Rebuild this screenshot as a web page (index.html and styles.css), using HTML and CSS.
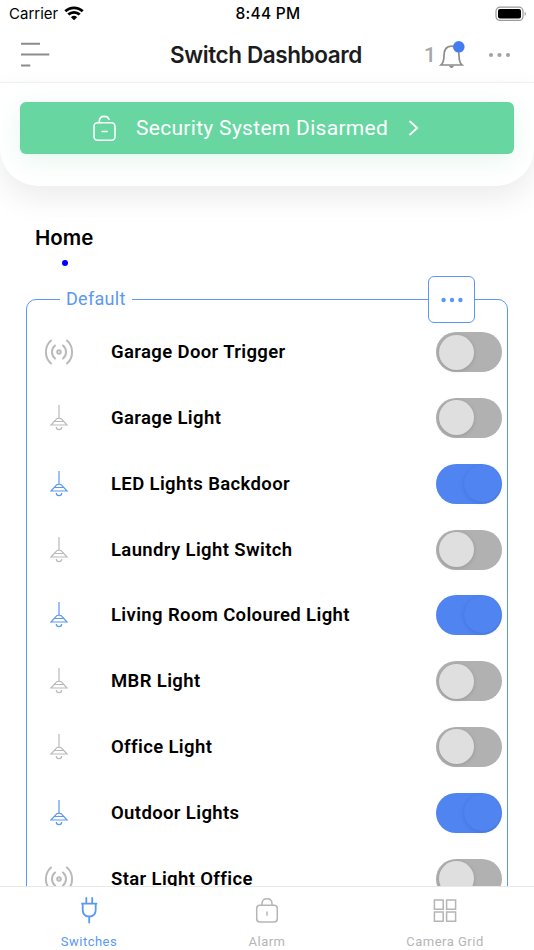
FILE: index.html
```html
<!DOCTYPE html>
<html lang="en">
<head>
  <meta charset="UTF-8">
  <meta name="viewport" content="width=device-width, initial-scale=1">
  <title>Switch Dashboard</title>
  <link rel="stylesheet" href="styles.css">
</head>
<body>

<!-- Icons -->
<svg class="sprite" xmlns="http://www.w3.org/2000/svg">
  <symbol id="icon-lamp" viewBox="0 0 20 28">
    <path d="M10 1v13M6.200 16.500Q7.200 14.200 10 14.200t3.800 2.300L18 21H2zM5.500 17.500h9M7.300 23a2.700 2.700 0 0 0 5.400 0"/>
  </symbol>
  <symbol id="icon-signal" viewBox="0 0 32 28">
    <circle cx="16" cy="14" r="1.800"/>
    <path d="M12 7.500a8.500 8.500 0 0 0 0 13M20 7.500a8.500 8.500 0 0 1 0 13M8 2.500a15.500 15.500 0 0 0 0 23M24 2.500a15.500 15.500 0 0 1 0 23"/>
  </symbol>
</svg>

<div class="status-bar">
  <span class="carrier">Carrier
    <svg width="20" height="15" viewBox="0 0 20 15">
      <path d="M1.300 5.300a12.500 12.500 0 0 1 17.400 0M4.300 8.600a8.200 8.200 0 0 1 11.400 0" fill="none" stroke="#000" stroke-width="2.800"/>
      <path d="M10 14.200L6.900 11.300a4.500 4.500 0 0 1 6.200 0z"/>
    </svg>
  </span>
  <span class="clock">8:44 PM</span>
  <svg class="battery" width="32" height="16" viewBox="0 0 32 16">
    <rect x="1" y="1.200" width="27" height="13.200" rx="4" fill="none" stroke="#999" stroke-width="1.200"/>
    <rect x="3" y="3" width="23" height="9.600" rx="2"/>
    <path d="M29.700 5.500q2.400 2.300 0 4.600z" fill="#999"/>
  </svg>
</div>

<header class="header">
  <svg class="menu" width="32" height="26" viewBox="0 0 32 26">
    <path d="M1 1.800h19M1 12.600h28.300M1 23.400h9.300"/>
  </svg>
  <h1>Switch Dashboard</h1>
  <div class="actions">
    <span class="count">1</span>
    <svg class="bell" width="28" height="30" viewBox="0 0 28 30">
      <path d="M3 25c2.200-2 3-4.500 3-9.500 0-6 2.600-9.300 7.500-9.300s7.500 3.300 7.500 9.300c0 5 .8 7.500 3 9.500z" fill="none" stroke="#8c8c8c" stroke-width="1.700"/>
      <path d="M11 25.700h5q-.7 2.400-2.500 2.400t-2.500-2.400z" fill="#8c8c8c"/>
      <circle class="badge" cx="20.800" cy="6.800" r="5.800"/>
    </svg>
    <svg class="more" width="24" height="6" viewBox="0 0 24 6">
      <circle cx="3" cy="3" r="2.100"/><circle cx="11.500" cy="3" r="2.100"/><circle cx="20" cy="3" r="2.100"/>
    </svg>
  </div>
</header>

<section class="panel">
  <div class="security">
    <svg width="26" height="28" viewBox="0 0 26 28">
      <rect x="2" y="8.800" width="21" height="17.400" rx="3.500"/>
      <path d="M7.300 8.800V7.200q0-4.800 5-4.800 3.600 0 4.700 2.900M10.200 17.500h4.900"/>
    </svg>
    <span>Security System Disarmed</span>
    <svg class="chevron" width="12" height="18" viewBox="0 0 12 18">
      <path d="M2 2.500l7.200 6.500L2 15.500"/>
    </svg>
  </div>
</section>

<main>
  <h2>Home</h2>
  <div class="dot"></div>

  <fieldset class="group">
    <legend>Default</legend>
    <button class="group-more" aria-label="More">
      <svg width="24" height="6" viewBox="0 0 24 6">
        <circle cx="3.600" cy="3" r="2.200"/><circle cx="12" cy="3" r="2.200"/><circle cx="20.400" cy="3" r="2.200"/>
      </svg>
    </button>
    <div id="switchList"></div>
  </fieldset>
</main>

<nav class="tabs">
  <a class="tab active">
    <svg width="28" height="30" viewBox="0 0 28 30">
      <path d="M11.300 3v5.500M17.200 3v5.500M7 8.700h14.500M7.700 8.700v5.800q0 7 6.500 7t6.500-7V8.700M14.200 21.500v6"/>
    </svg>
    <span>Switches</span>
  </a>
  <a class="tab">
    <svg width="28" height="30" viewBox="0 0 28 30">
      <rect x="3.700" y="10.300" width="20.600" height="16.700" rx="3.200"/>
      <path d="M9 10.300V8.600q0-4.900 5-4.900t5 4.900v1.700M14 16.500v4.300"/>
    </svg>
    <span>Alarm</span>
  </a>
  <a class="tab">
    <svg width="28" height="30" viewBox="0 0 28 30">
      <path d="M3.400 5h8.800v9.300H3.400zM15.600 5h9v9.300h-9zM3.400 17h8.800v9.300H3.400zM15.600 17h9v9.300h-9z"/>
    </svg>
    <span>Camera Grid</span>
  </a>
</nav>

<script>
  const switches = [
    { name: "Garage Door Trigger", icon: "signal", on: false },
    { name: "Garage Light", icon: "lamp", on: false },
    { name: "LED Lights Backdoor", icon: "lamp", on: true },
    { name: "Laundry Light Switch", icon: "lamp", on: false },
    { name: "Living Room Coloured Light", icon: "lamp", on: true },
    { name: "MBR Light", icon: "lamp", on: false },
    { name: "Office Light", icon: "lamp", on: false },
    { name: "Outdoor Lights", icon: "lamp", on: true },
    { name: "Star Light Office", icon: "signal", on: false }
  ];

  const list = document.getElementById("switchList");
  switches.forEach(s => {
    const div = document.createElement("div");
    div.className = s.on ? "row on" : "row";
    div.innerHTML = `
      <span class="row-icon"><svg class="${s.icon}"><use href="#icon-${s.icon}"></use></svg></span>
      <span class="name">${s.name}</span>
      <span class="toggle"><span class="knob"></span></span>
    `;
    div.querySelector(".toggle").addEventListener("click", () => div.classList.toggle("on"));
    list.appendChild(div);
  });
</script>
</body>
</html>
```
FILE: styles.css
```css
* {
  box-sizing: border-box;
}
body {
  margin: 0;
  height: 950px;
  overflow: hidden;
  display: flex;
  flex-direction: column;
  background: #fff;
  color: #000;
  font-family: Roboto, "Liberation Sans", sans-serif;
}
svg {
  display: block;
}
.sprite {
  position: absolute;
  width: 0;
  height: 0;
}
.status-bar {
  flex: none;
  height: 27px;
  padding: 0 7px 0 9px;
  display: grid;
  grid-template-columns: 1fr auto 1fr;
  align-items: center;
  font-family: Inter, sans-serif;
  font-size: 15px;
}
.carrier {
  display: flex;
  align-items: center;
  gap: 6px;
}
.clock {
  font-size: 15.5px;
  font-weight: 500;
  letter-spacing: 0.3px;
}
.battery {
  justify-self: end;
}
.header {
  flex: none;
  height: 56px;
  padding: 0 22px 0 20px;
  display: grid;
  grid-template-columns: 1fr auto 1fr;
  align-items: center;
  border-bottom: 1px solid #f1f1f1;
}
.menu {
  fill: none;
  stroke: #8c8c8c;
  stroke-width: 2;
}
h1 {
  margin: 0;
  font-family: Inter, sans-serif;
  font-size: 22.5px;
  font-weight: 600;
  letter-spacing: -0.4px;
  color: #1c1c1e;
}
.actions {
  display: flex;
  align-items: center;
  justify-content: flex-end;
}
.count {
  font-size: 21px;
  font-weight: 500;
  color: #a5a5a5;
}
.bell {
  margin: 0 22px 0 2px;
}
.badge {
  fill: #447cf0;
}
.more {
  fill: #a3a3a3;
}
.panel {
  flex: none;
  height: 103px;
  padding: 19px 20px 0;
  border-radius: 0 0 38px 38px;
  box-shadow: 0 12px 30px rgba(0,0,0,0.08);
}
.security {
  height: 52px;
  padding-left: 72px;
  display: flex;
  align-items: center;
  gap: 18px;
  border-radius: 6px;
  background: #67d6a1;
  box-shadow: 0 6px 26px rgba(103,214,161,0.18);
  color: #fff;
  font-size: 21px;
  letter-spacing: 0.3px;
}
.security svg {
  fill: none;
  stroke: #fff;
  stroke-width: 1.6;
  stroke-linecap: round;
}
.security .chevron {
  margin-left: 2px;
  stroke-width: 1.8;
}
main {
  flex: 1;
  min-height: 0;
  overflow: hidden;
  padding: 38px 26px 0;
}
h2 {
  margin: 0 0 0 9px;
  font-family: Inter, sans-serif;
  font-size: 20.5px;
  line-height: 27px;
  font-weight: 600;
}
.dot {
  width: 6px;
  height: 6px;
  margin: 9px 0 0 36px;
  border-radius: 50%;
  background: #0000fe;
}
.group {
  position: relative;
  min-width: 0;
  height: 680px;
  margin: 20px 0 0;
  padding: 0 5px;
  border: 1px solid #5a98f4;
  border-radius: 10px;
}
legend {
  margin-left: 28px;
  padding: 0 6px;
  font-size: 18px;
  line-height: 26px;
  letter-spacing: 0.3px;
  color: #5a98f4;
}
.group-more {
  position: absolute;
  top: -36px;
  right: 32px;
  width: 47px;
  height: 47px;
  padding: 0;
  display: flex;
  align-items: center;
  justify-content: center;
  border: 1px solid #5a98f4;
  border-radius: 6px;
  background: #fff;
  fill: #5a98f4;
}
#switchList {
  padding-top: 7.3px;
}
.row {
  height: 65.8px;
  display: flex;
  align-items: center;
}
.row-icon {
  width: 79px;
  padding-right: 25px;
  display: flex;
  justify-content: center;
  fill: none;
  stroke: #bababa;
}
.lamp {
  width: 20px;
  height: 28px;
  stroke-width: 1.2;
}
.signal {
  width: 32px;
  height: 28px;
  stroke-width: 2;
  stroke-linecap: round;
}
.on .row-icon {
  stroke: #5a98f4;
}
.name {
  flex: 1;
  font-size: 18.5px;
  font-weight: 600;
  letter-spacing: 0.37px;
}
.toggle {
  width: 66px;
  height: 40px;
  padding: 2.5px;
  display: flex;
  border-radius: 20px;
  background: #b1b1b1;
  cursor: pointer;
}
.knob {
  width: 35px;
  height: 35px;
  border-radius: 50%;
  background: #dfdfdf;
  box-shadow: 0 1px 4px rgba(0,0,0,0.15);
}
.on .toggle {
  justify-content: flex-end;
  padding: 1px;
  background: #4f84f1;
}
.on .knob {
  width: 37px;
  height: 37px;
  background: #4f84f1;
  box-shadow: 0 1px 4px rgba(0,0,0,0.12);
}
.tabs {
  flex: none;
  height: 64px;
  display: grid;
  grid-template-columns: repeat(3, 1fr);
  border-top: 1px solid #e8e8e8;
  background: #fff;
}
.tab {
  padding-top: 8px;
  display: flex;
  flex-direction: column;
  align-items: center;
  gap: 9px;
  font-size: 13px;
  line-height: 16px;
  letter-spacing: 0.5px;
  color: #b5b5b5;
}
.tab svg {
  fill: none;
  stroke: currentColor;
  stroke-width: 1.5;
}
.tab.active {
  color: #5a98f4;
}
.tab.active svg {
  stroke-width: 1.8;
  stroke-linecap: round;
}
```
